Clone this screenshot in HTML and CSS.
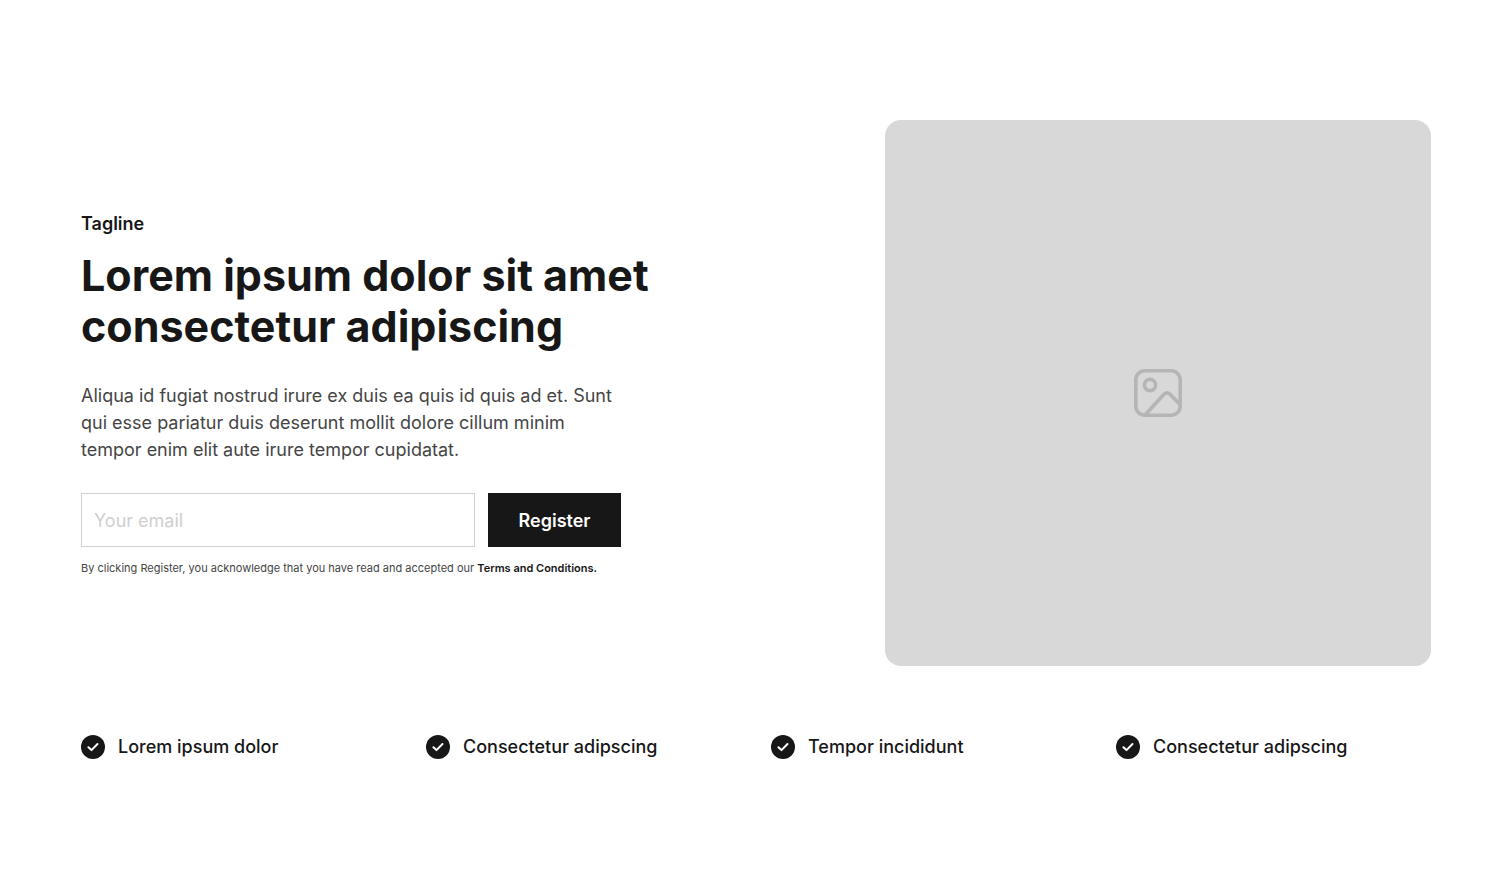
FILE: index.html
```html
<!DOCTYPE html>
<html lang="en">
<head>
    <meta charset="UTF-8">
    <meta name="viewport" content="width=device-width, initial-scale=1.0">
    <title>Register</title>
    <link rel="stylesheet" href="styles.css">
</head>
<body>
    <main class="section">
        <div class="hero">
            <div class="hero-content">
                <p class="tagline">Tagline</p>
                <h1>Lorem ipsum dolor sit amet consectetur adipiscing</h1>
                <p class="description">Aliqua id fugiat nostrud irure ex duis ea quis id quis ad et. Sunt qui esse pariatur duis deserunt mollit dolore cillum minim tempor enim elit aute irure tempor cupidatat.</p>
                <form class="register-form">
                    <input type="email" id="email" placeholder="Your email" aria-label="Your email">
                    <button type="submit" class="btn-register">Register</button>
                </form>
                <p class="terms">By clicking Register, you acknowledge that you have read and accepted our <a href="#">Terms and Conditions.</a></p>
            </div>
            <div class="hero-image">
                <svg width="54" height="54" viewBox="0 0 54 54" fill="none" stroke="#b5b5b5" stroke-width="3.6" stroke-linecap="round" stroke-linejoin="round">
                    <rect x="4.8" y="4.8" width="44.4" height="44.4" rx="9"/>
                    <circle cx="19" cy="19" r="5.6"/>
                    <path d="M15 48 L33.2 28 Q36 25.600 38.8 28 L48.500 38"/>
                </svg>
            </div>
        </div>

        <ul class="features">
            <li>
                <svg width="24" height="24" viewBox="0 0 24 24" fill="none"><circle cx="12" cy="12" r="12" fill="#171717"/><path d="M7.4 12.2 L10.5 15.1 L16.5 9" stroke="#fff" stroke-width="2" stroke-linecap="round" stroke-linejoin="round"/></svg>
                <span>Lorem ipsum dolor</span>
            </li>
            <li>
                <svg width="24" height="24" viewBox="0 0 24 24" fill="none"><circle cx="12" cy="12" r="12" fill="#171717"/><path d="M7.4 12.2 L10.5 15.1 L16.5 9" stroke="#fff" stroke-width="2" stroke-linecap="round" stroke-linejoin="round"/></svg>
                <span>Consectetur adipscing</span>
            </li>
            <li>
                <svg width="24" height="24" viewBox="0 0 24 24" fill="none"><circle cx="12" cy="12" r="12" fill="#171717"/><path d="M7.4 12.2 L10.5 15.1 L16.5 9" stroke="#fff" stroke-width="2" stroke-linecap="round" stroke-linejoin="round"/></svg>
                <span>Tempor incididunt</span>
            </li>
            <li>
                <svg width="24" height="24" viewBox="0 0 24 24" fill="none"><circle cx="12" cy="12" r="12" fill="#171717"/><path d="M7.4 12.2 L10.5 15.1 L16.5 9" stroke="#fff" stroke-width="2" stroke-linecap="round" stroke-linejoin="round"/></svg>
                <span>Consectetur adipscing</span>
            </li>
        </ul>
    </main>
</body>
</html>
```
FILE: styles.css
```css
* {
    box-sizing: border-box;
}

body {
    font-family: Inter, 'Liberation Sans', sans-serif;
    margin: 0;
    background-color: #fff;
    color: #171717;
}

h1, p, ul {
    margin: 0;
    padding: 0;
}

.section {
    padding: 120px 81px;
}

.hero {
    display: grid;
    grid-template-columns: 1fr 546px;
    gap: 80px;
    align-items: center;
}

.hero-content {
    max-width: 580px;
}

.tagline {
    font-size: 18px;
    line-height: 27px;
    font-weight: 600;
    margin-bottom: 13px;
}

h1 {
    font-size: 43px;
    line-height: 51px;
    font-weight: 700;
    margin-bottom: 30px;
}

.description {
    max-width: 540px;
    font-size: 18px;
    line-height: 27px;
    color: #454545;
    margin-bottom: 30px;
}

.register-form {
    display: flex;
    gap: 13px;
    max-width: 540px;
    margin-bottom: 14px;
}

.register-form input {
    flex: 1;
    min-width: 0;
    height: 54px;
    padding: 0 12px;
    border: 1px solid #d0d0d0;
    border-radius: 0;
    font-family: inherit;
    font-size: 18px;
    color: #171717;
}

.register-form input::placeholder {
    color: #d0d0d0;
}

.btn-register {
    width: 133px;
    height: 54px;
    background-color: #171717;
    color: #fff;
    border: none;
    font-family: inherit;
    font-size: 18px;
    font-weight: 600;
    cursor: pointer;
}

.terms {
    font-size: 11px;
    line-height: 15px;
    color: #454545;
}

.terms a {
    color: #171717;
    font-weight: 600;
    text-decoration: none;
}

.hero-image {
    display: flex;
    justify-content: center;
    align-items: center;
    aspect-ratio: 1;
    background-color: #d8d8d8;
    border-radius: 16px;
}

.features {
    display: grid;
    grid-template-columns: repeat(4, 1fr);
    gap: 30px;
    margin-top: 68px;
    list-style: none;
}

.features li {
    display: flex;
    align-items: center;
    gap: 13px;
    font-size: 18px;
    line-height: 26px;
    font-weight: 500;
}
```
